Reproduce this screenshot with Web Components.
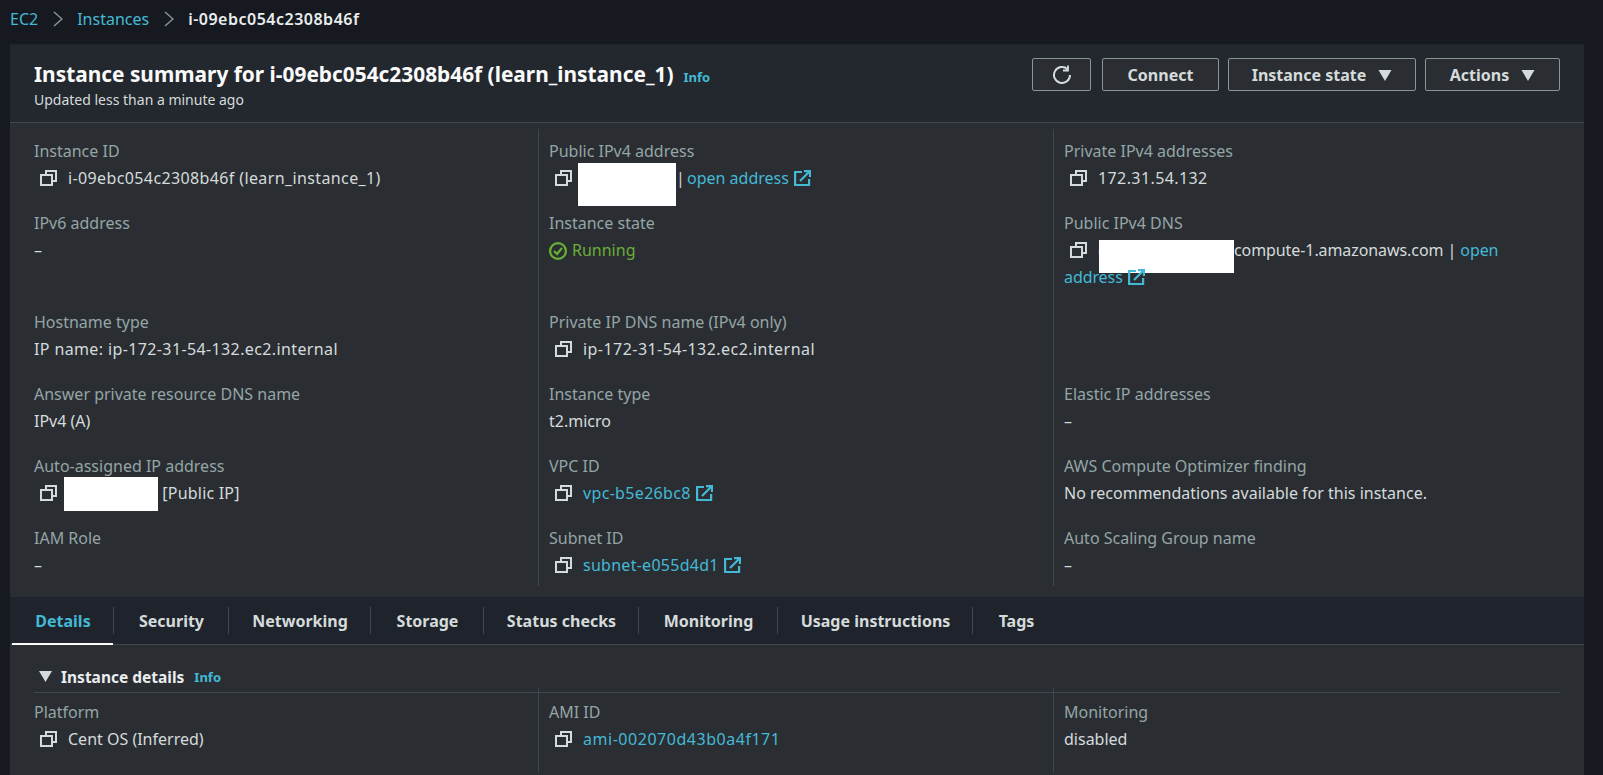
<!DOCTYPE html>
<html>
<head>
<meta charset="utf-8">
<title>Instance summary</title>
<style>
  html, body { margin: 0; height: 100%; overflow: hidden; }
  body {
    background: #16191f;
    color: #d5dbdb;
    font: 16px/22px "Noto Sans", sans-serif;
  }
  a { color: #44b9d6; text-decoration: none; }
</style>
</head>
<body>
<aws-page>
  <aws-breadcrumbs slot="crumbs">
    <a href="#">EC2</a>
    <crumb-chevron></crumb-chevron>
    <a href="#">Instances</a>
    <crumb-chevron></crumb-chevron>
    <b>i-09ebc054c2308b46f</b>
  </aws-breadcrumbs>

  <summary-header slot="head">
    <span slot="title">Instance summary for i-09ebc054c2308b46f (learn_instance_1)</span>
    <span slot="sub">Updated less than a minute ago</span>
    <aws-button icon="refresh" slot="actions" style="margin-right:2px"></aws-button>
    <aws-button slot="actions" style="width:117px">Connect</aws-button>
    <aws-button slot="actions" caret style="width:188px">Instance state</aws-button>
    <aws-button slot="actions" caret style="width:135px">Actions</aws-button>
  </summary-header>

  <field-grid slot="summary">
    <kv-field tracking=".38" label="Instance ID"><copy-icon></copy-icon>i-09ebc054c2308b46f (learn_instance_1)</kv-field>
    <kv-field label="Public IPv4 address"><copy-icon></copy-icon><redact-box w="98" h="43" style="margin-left:-5px;vertical-align:0"></redact-box>| <ext-link style="margin-left:-2px">open address</ext-link></kv-field>
    <kv-field tracking=".4" label="Private IPv4 addresses"><copy-icon></copy-icon>172.31.54.132</kv-field>

    <kv-field label="IPv6 address">–</kv-field>
    <kv-field label="Instance state"><status-ok>Running</status-ok></kv-field>
    <kv-field tracking="-.08" label="Public IPv4 DNS"><copy-icon></copy-icon>e<redact-box w="135" h="33" style="margin-left:-8px;vertical-align:0"></redact-box>compute-1.amazonaws.com | <a href="#">open</a> <ext-link>address</ext-link></kv-field>

    <kv-field tracking=".38" label="Hostname type">IP name: ip-172-31-54-132.ec2.internal</kv-field>
    <kv-field tracking=".45" label="Private IP DNS name (IPv4 only)"><copy-icon></copy-icon>ip-172-31-54-132.ec2.internal</kv-field>
    <kv-field></kv-field>

    <kv-field label="Answer private resource DNS name">IPv4 (A)</kv-field>
    <kv-field label="Instance type">t2.micro</kv-field>
    <kv-field label="Elastic IP addresses">–</kv-field>

    <kv-field tracking=".2" label="Auto-assigned IP address"><copy-icon></copy-icon><redact-box w="94" h="34" style="margin-left:-4px;vertical-align:5px"></redact-box> [Public IP]</kv-field>
    <kv-field tracking=".33" label="VPC ID"><copy-icon></copy-icon><ext-link>vpc-b5e26bc8</ext-link></kv-field>
    <kv-field label="AWS Compute Optimizer finding">No recommendations available for this instance.</kv-field>

    <kv-field last label="IAM Role">–</kv-field>
    <kv-field last tracking=".27" label="Subnet ID"><copy-icon></copy-icon><ext-link>subnet-e055d4d1</ext-link></kv-field>
    <kv-field last label="Auto Scaling Group name">–</kv-field>
  </field-grid>

  <tab-bar slot="tabs">
    <tab-item active style="width:102px">Details</tab-item>
    <tab-item style="width:115px">Security</tab-item>
    <tab-item style="width:142px">Networking</tab-item>
    <tab-item style="width:113px">Storage</tab-item>
    <tab-item style="width:155px">Status checks</tab-item>
    <tab-item style="width:139px">Monitoring</tab-item>
    <tab-item style="width:195px">Usage instructions</tab-item>
    <tab-item last style="width:87px">Tags</tab-item>
  </tab-bar>

  <section-head slot="details">Instance details</section-head>
  <field-grid slot="details" tight>
    <kv-field label="Platform"><copy-icon></copy-icon>Cent OS (Inferred)</kv-field>
    <kv-field tracking=".53" label="AMI ID"><copy-icon></copy-icon><a href="#">ami-002070d43b0a4f171</a></kv-field>
    <kv-field label="Monitoring">disabled</kv-field>
  </field-grid>
</aws-page>

<script>
  function shadow(el, html) {
    el.attachShadow({ mode: "open" }).innerHTML = html;
  }

  const COPY_SVG = `<svg width="17" height="16" viewBox="0 0 17 16" fill="none" stroke="#d5dbdb" stroke-width="2">
    <path d="M6 4V1h10v10h-4"/>
    <rect x="1" y="5" width="11" height="10"/>
  </svg>`;

  class AwsPage extends HTMLElement {
    constructor() {
      super();
      shadow(this, `
        <style>
          :host { display: block; }
          .crumbs { height: 45px; padding: 0 0 8px 10px; display: flex; align-items: center; box-sizing: border-box; }
          .card { margin: 0 19px 0 10px; background: #2a2e33; height: 730px; overflow: hidden; box-shadow: 0 -1px 0 #1f242b; }
          .details { padding: 0 24px; }
        </style>
        <div class="crumbs"><slot name="crumbs"></slot></div>
        <div class="card">
          <slot name="head"></slot>
          <slot name="summary"></slot>
          <slot name="tabs"></slot>
          <div class="details"><slot name="details"></slot></div>
        </div>`);
    }
  }
  customElements.define("aws-page", AwsPage);

  class AwsBreadcrumbs extends HTMLElement {
    constructor() {
      super();
      shadow(this, `
        <style>
          :host { display: flex; align-items: center; }
          ::slotted(b) { color: #eaeded; font-weight: 600; letter-spacing: .5px; }
        </style>
        <slot></slot>`);
    }
  }
  customElements.define("aws-breadcrumbs", AwsBreadcrumbs);

  class CrumbChevron extends HTMLElement {
    constructor() {
      super();
      shadow(this, `
        <style>:host { display: inline-flex; margin: 0 14px 0 15px; }</style>
        <svg width="10" height="16" viewBox="0 0 10 16" fill="none" stroke="#879596" stroke-width="1.5"><path d="M1 1l8 7-8 7"/></svg>`);
    }
  }
  customElements.define("crumb-chevron", CrumbChevron);

  class SummaryHeader extends HTMLElement {
    constructor() {
      super();
      shadow(this, `
        <style>
          :host {
            display: flex; justify-content: space-between;
            height: 78px; box-sizing: border-box;
            padding: 13px 24px 0 24px;
            background: #23282f; border-bottom: 1px solid #414750;
          }
          .title { font-size: 20.86px; font-weight: 700; line-height: 32px; color: #fafafa; white-space: nowrap; }
          .info { font-size: 13px; font-weight: 700; color: #44b9d6; margin-left: 10px; }
          .sub { font-size: 14px; line-height: 18px; color: #d5dbdb; margin-top: -2px; }
          .actions { display: flex; gap: 9px; align-items: flex-start; }
        </style>
        <div>
          <div class="title"><slot name="title"></slot><span class="info">Info</span></div>
          <div class="sub"><slot name="sub"></slot></div>
        </div>
        <div class="actions"><slot name="actions"></slot></div>`);
    }
  }
  customElements.define("summary-header", SummaryHeader);

  class AwsButton extends HTMLElement {
    constructor() {
      super();
      const isRefresh = this.getAttribute("icon") == "refresh";
      const icon = isRefresh
        ? `<svg width="20" height="20" viewBox="0 0 20 20" fill="none" stroke="#d5dbdb" stroke-width="2"><path d="M15.5 4.2A8 8 0 1 0 18 10"/><path d="M16 .5v5h-5" stroke-width="1.8"/></svg>`
        : "";
      const caret = this.hasAttribute("caret")
        ? `<svg class="caret" width="14" height="12" viewBox="0 0 14 12"><path d="M.5 1h13L7 12z" fill="#d5dbdb"/></svg>`
        : "";
      shadow(this, `
        <style>
          :host {
            display: inline-flex; align-items: center; justify-content: center;
            box-sizing: border-box; height: 33px; min-width: 59px;
            border: 1px solid #879596; border-radius: 2px;
            background: #2a2e33; color: #d5dbdb;
            font-weight: 700; font-size: 16px; white-space: nowrap;
          }
          .caret { margin-left: 12px; }
        </style>
        ${icon}<slot></slot>${caret}`);
    }
  }
  customElements.define("aws-button", AwsButton);

  class FieldGrid extends HTMLElement {
    constructor() {
      super();
      shadow(this, `
        <style>
          :host {
            display: grid; grid-template-columns: 504px 515px 531px;
            padding: 6px 0 11px 24px;
          }
          :host([tight]) { padding: 0; margin-top: -5px; grid-template-columns: 504px 515px 507px; }
          :host([tight]) ::slotted(kv-field) { padding-top: 13px; }
        </style>
        <slot></slot>`);
    }
  }
  customElements.define("field-grid", FieldGrid);

  class KvField extends HTMLElement {
    constructor() {
      super();
      const label = this.getAttribute("label");
      // digit heavy values run a bit wider in the reference
      const tracking = this.getAttribute("tracking") || 0;
      shadow(this, `
        <style>
          :host { display: block; padding-bottom: 20px; min-width: 0; }
          :host(:not(:nth-child(3n+1))) { border-left: 1px solid #414750; padding-left: 10px; }
          :host(:nth-child(3n)) { padding-right: 24px; }
          :host(:nth-child(-n+3)) { padding-top: 11px; }
          :host([last]) { padding-bottom: 7px; }
          .label { color: #95a5a6; line-height: 22px; margin-bottom: 3px; }
          .value { line-height: 27px; min-height: 27px; letter-spacing: ${tracking}px; }
          ::slotted(copy-icon) { margin: 0 11px 0 6px; }
        </style>
        ${label ? `<div class="label">${label}</div>` : ""}
        <div class="value"><slot></slot></div>`);
    }
  }
  customElements.define("kv-field", KvField);

  class CopyIcon extends HTMLElement {
    constructor() {
      super();
      shadow(this, `<style>
          :host { display: inline-block; width: 17px; height: 16px; vertical-align: -2px; }
          svg { display: block; }
        </style>${COPY_SVG}`);
    }
  }
  customElements.define("copy-icon", CopyIcon);

  class RedactBox extends HTMLElement {
    constructor() {
      super();
      const w = this.getAttribute("w");
      const h = this.getAttribute("h");
      shadow(this, `<style>
          :host {
            display: inline-block; background: #fff; vertical-align: middle;
            width: ${w}px; height: ${h}px; margin-top: -${h / 2}px; margin-bottom: -${h / 2}px;
          }
        </style>`);
    }
  }
  customElements.define("redact-box", RedactBox);

  class ExtLink extends HTMLElement {
    constructor() {
      super();
      shadow(this, `<style>
          :host { color: #44b9d6; white-space: nowrap; }
          svg { vertical-align: -2px; margin-left: 5px; }
        </style><slot></slot><svg width="17" height="16" viewBox="0 0 17 16" fill="none" stroke="#44b9d6" stroke-width="2.2">
          <path d="M8 2H1.100v13h14V9"/><path d="M6 11l9-9M10 1.100h6v6"/>
        </svg>`);
    }
  }
  customElements.define("ext-link", ExtLink);

  class StatusOk extends HTMLElement {
    constructor() {
      super();
      shadow(this, `<style>
          :host { color: #6aaf35; display: inline-flex; align-items: center; gap: 5px; }
        </style><svg width="18" height="18" viewBox="0 0 18 18" fill="none" stroke="#6aaf35" stroke-width="2.2">
          <circle cx="9" cy="9" r="7.900"/><path d="M5 9l3 3 5-6"/>
        </svg><slot></slot>`);
    }
  }
  customElements.define("status-ok", StatusOk);

  class TabBar extends HTMLElement {
    constructor() {
      super();
      shadow(this, `
        <style>
          :host {
            display: flex; align-items: stretch; height: 48px; box-sizing: border-box;
            padding-left: 2px; background: #1f242c; border-bottom: 1px solid #414750;
          }
        </style>
        <slot></slot>`);
    }
  }
  customElements.define("tab-bar", TabBar);

  class TabItem extends HTMLElement {
    constructor() {
      super();
      shadow(this, `
        <style>
          :host {
            display: flex; align-items: center; justify-content: center; position: relative;
            height: 47px; box-sizing: border-box;
            font-weight: 700; color: #d5dbdb; white-space: nowrap;
          }
          :host([active]) { color: #44b9d6; }
          :host([active])::after {
            content: ""; position: absolute; left: 0; right: 1px; bottom: -1px; height: 2px; background: #fafafa;
          }
          :host(:not([last]))::before {
            content: ""; position: absolute; right: 0; top: 10px; height: 27px; width: 1px; background: #414750;
          }
        </style>
        <slot></slot>`);
    }
  }
  customElements.define("tab-item", TabItem);

  class SectionHead extends HTMLElement {
    constructor() {
      super();
      shadow(this, `
        <style>
          :host {
            display: flex; align-items: center; height: 48px; box-sizing: border-box;
            padding-top: 24px; padding-bottom: 8px;
            border-bottom: 1px solid #414750; font-weight: 700; font-size: 15.5px; color: #eaeded;
          }
          svg { margin: 0 9px 0 5px; }
          a { font-size: 13px; color: #44b9d6; margin-left: 10px; text-decoration: none; }
        </style>
        <svg width="13" height="11" viewBox="0 0 13 11"><path d="M0 0h13L6.500 11z" fill="#d5dbdb"/></svg>
        <slot></slot><a href="#">Info</a>`);
    }
  }
  customElements.define("section-head", SectionHead);
</script>
</body>
</html>
